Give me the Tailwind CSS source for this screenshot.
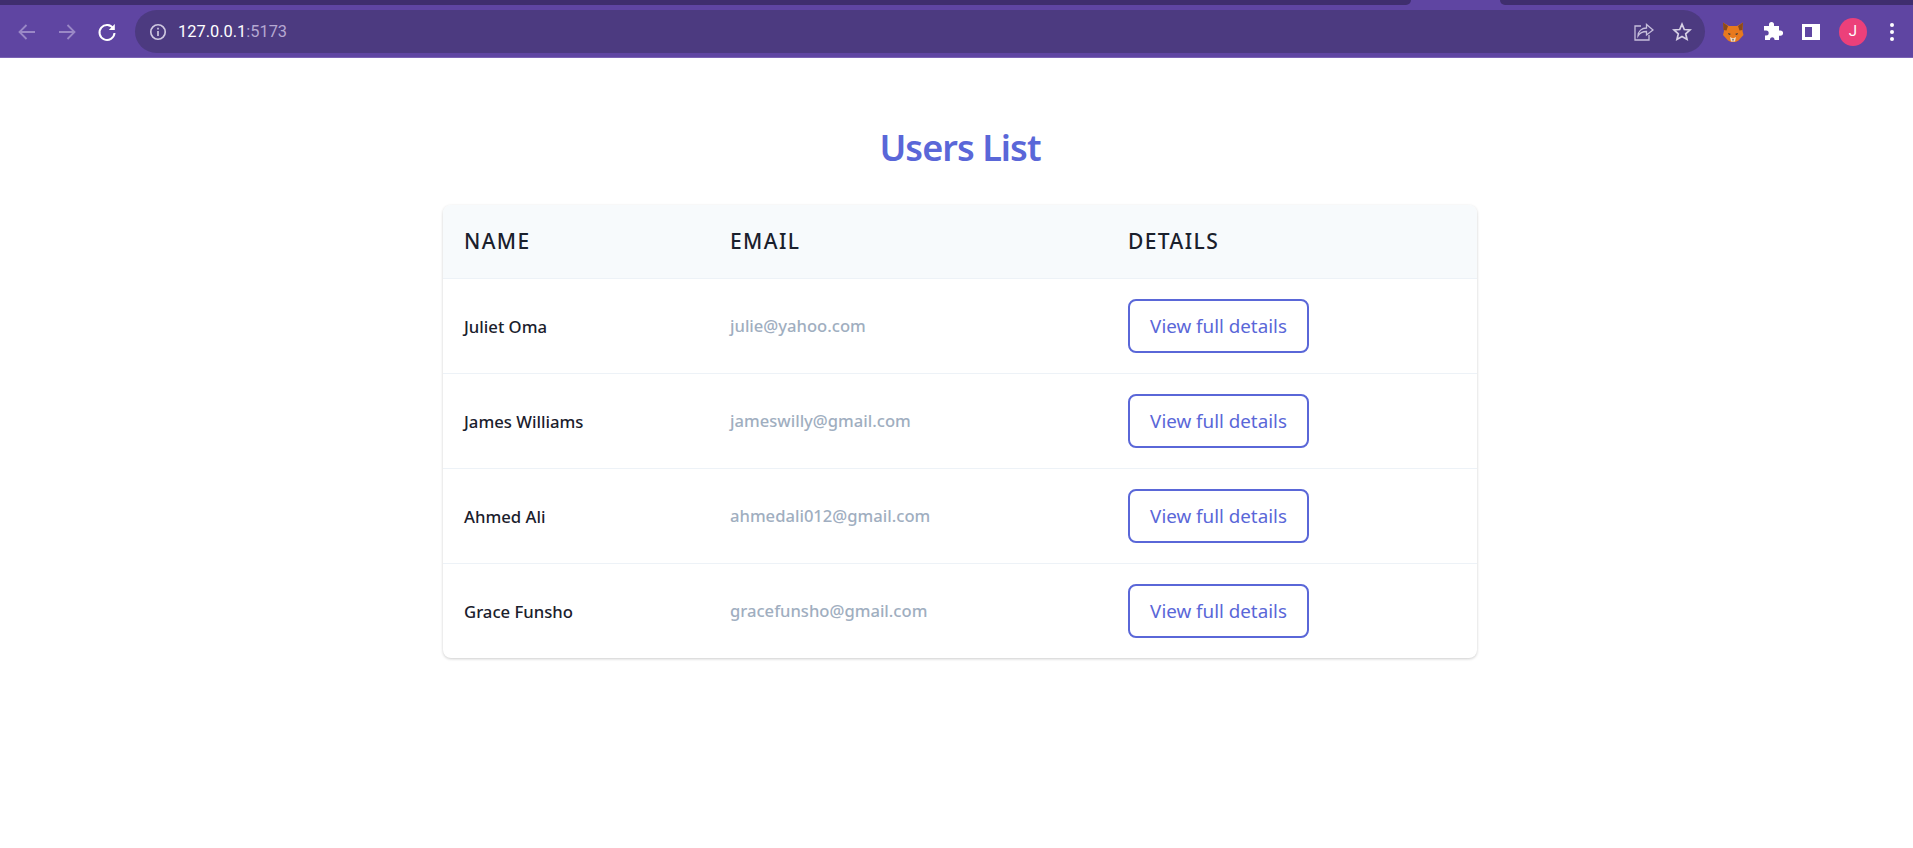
<!DOCTYPE html>
<html><head><meta charset="utf-8"><title>Users List</title>
<script src="https://cdn.jsdelivr.net/npm/@tailwindcss/browser@4"></script></head>
<body class="bg-white h-[848px] overflow-hidden font-['Noto_Sans',sans-serif]">
<header class="h-[58px] bg-[#5f45a2] border-b border-[#7a62b4] flex flex-col font-['Roboto',sans-serif]">
  <div class="h-[5px] flex justify-between">
    <div class="w-[1411px] bg-[#3f2e6e] rounded-br-lg"></div>
    <div class="w-[413px] bg-[#3f2e6e] rounded-bl-lg"></div>
  </div>
  <div class="flex-1 flex items-center pt-[5px] pb-[4px]">
    <div class="w-[135px] flex items-center pl-[15px] gap-[16px] shrink-0">
      <svg class="w-[24px] h-[24px]" viewBox="0 0 24 24" fill="none" stroke="#9a88c6" stroke-width="1.8"><path d="M20 12H4.500M11.500 5l-7 7 7 7"/></svg>
      <svg class="w-[24px] h-[24px]" viewBox="0 0 24 24" fill="none" stroke="#9a88c6" stroke-width="1.8"><path d="M4 12h15.500M12.500 5l7 7-7 7"/></svg>
      <svg class="w-[24px] h-[24px]" viewBox="0 0 24 24" fill="none" stroke="#fff" stroke-width="2"><path d="M18.400 8.500A7.500 7.500 0 1 0 19.500 13"/><path d="M19.800 4v6h-6z" fill="#fff" stroke="none"/></svg>
    </div>
    <div class="w-[1570px] h-[43px] rounded-full bg-[#4c3a80] flex items-center pl-[13px] pr-[10px] shrink-0">
      <svg class="w-[20px] h-[20px] shrink-0" viewBox="0 0 18 18" fill="none"><circle cx="9" cy="9" r="6.500" stroke="#cfc8e0" stroke-width="1.500"/><path d="M9 8v4.500M9 5.200v1.500" stroke="#cfc8e0" stroke-width="1.500"/></svg>
      <span class="ml-[10px] mt-[2px] text-[16.400px] text-white">127.0.0.1<span class="text-[#b5a8d2]">:5173</span></span>
      <span class="flex-1"></span>
      <svg class="w-[22px] h-[22px] mr-[18px]" viewBox="0 0 22 22" fill="none" stroke="#c6bedb" stroke-width="1.300"><path d="M9 5H3v14h14v-5"/><path d="M6 15c0-5 4-8 8.500-8V3.500L21 9l-6.500 5v-3.500c-4 0-6.500 1-8.500 4.500z"/></svg>
      <svg class="w-[20px] h-[20px] mr-[3px]" viewBox="0 0 20 20" fill="none" stroke="#d6d0e4" stroke-width="1.700"><path d="M10 2.200l2.300 5.300 5.700.5-4.300 3.800 1.300 5.600L10 14.500l-5 2.900 1.300-5.600L2 8l5.700-.5z"/></svg>
    </div>
    <div class="flex-1 flex items-center pl-[17px]">
      <svg class="w-[22px] h-[22px] shrink-0" viewBox="0 0 22 22"><path d="M1 1.500l6 3.500h8l6-3.500-.5 8.500 1 4-5 5.500-3 1.500H9l-3-1.500L1 14l1-4z" fill="#e8791e"/><path d="M1 1.500l5 3.500-1.500 4.500L1.500 9zM21 1.500L16 5l1.500 4.500 3-.5z" fill="#8a4a1c"/><path d="M8 16l3 1.500 3-1.500-1 4.500H9z" fill="#eadccb"/><path d="M6 12l3 1-2 1zM16 12l-3 1 2 1z" fill="#233447"/><path d="M10 18.500h2l-1 1.200z" fill="#161616"/></svg>
      <svg class="w-[22px] h-[22px] ml-[17px] shrink-0" viewBox="0 0 22 22" fill="#fff"><path d="M8 3.500a2.500 2.500 0 0 1 5 0V5h5v4.500h1.500a2.600 2.600 0 0 1 0 5.200H18V19h-4.500v-1a2.300 2.300 0 0 0-4.500 0v1H4v-4.500h1.200a2.500 2.500 0 0 0 0-5H3V5h5z"/></svg>
      <div class="w-[18px] h-[16px] ml-[19px] border-[3px] border-r-[8px] border-white shrink-0"></div>
      <div class="w-[28px] h-[28px] rounded-full bg-[#ec407a] ml-[19px] text-white text-[15px] flex items-center justify-center shrink-0">J</div>
      <div class="flex flex-col gap-[3px] ml-[23px] shrink-0">
        <span class="w-[4px] h-[4px] rounded-full bg-white"></span><span class="w-[4px] h-[4px] rounded-full bg-white"></span><span class="w-[4px] h-[4px] rounded-full bg-white"></span>
      </div>
    </div>
  </div>
</header>
<main class="flex flex-col items-center pl-[7px]">
  <h1 class="mt-[65px] h-[50px] leading-[50px] text-[36px] font-semibold text-[#5a67d8] tracking-[-0.95px]">Users List</h1>
  <div class="mt-[32px] w-[1034px] rounded-lg bg-white shadow-[0_1px_3px_rgba(0,0,0,0.2)] overflow-hidden">
    <table class="w-full table-fixed border-collapse">
      <thead class="bg-[#f7fafc] border-b border-[#edf2f7]">
        <tr class="h-[73px] text-left text-[21px] tracking-[1.4px] text-[#1a202c]">
          <th class="w-[266px] pl-[21px] font-medium">NAME</th>
          <th class="w-[398px] pl-[21px] font-medium">EMAIL</th>
          <th class="pl-[21px] font-medium">DETAILS</th>
        </tr>
      </thead>
      <tbody>
        <tr class="h-[95px] border-b border-[#edf2f7]">
          <td class="pl-[21px] pt-[2px] text-[16.700px] font-medium text-[#1a202c]">Juliet Oma</td>
          <td class="pl-[21px] pt-[2px] text-[16.600px] font-medium text-[#a0aec0]">julie@yahoo.com</td>
          <td class="pl-[21px]"><button class="h-[54px] w-[181px] pt-[1px] border-2 border-[#5a67d8] rounded-lg text-[18.800px] text-[#5a67d8]">View full details</button></td>
        </tr>
        <tr class="h-[95px] border-b border-[#edf2f7]">
          <td class="pl-[21px] pt-[2px] text-[16.700px] font-medium text-[#1a202c]">James Williams</td>
          <td class="pl-[21px] pt-[2px] text-[16.600px] font-medium text-[#a0aec0]">jameswilly@gmail.com</td>
          <td class="pl-[21px]"><button class="h-[54px] w-[181px] pt-[1px] border-2 border-[#5a67d8] rounded-lg text-[18.800px] text-[#5a67d8]">View full details</button></td>
        </tr>
        <tr class="h-[95px] border-b border-[#edf2f7]">
          <td class="pl-[21px] pt-[2px] text-[16.700px] font-medium text-[#1a202c]">Ahmed Ali</td>
          <td class="pl-[21px] pt-[2px] text-[16.600px] font-medium text-[#a0aec0]">ahmedali012@gmail.com</td>
          <td class="pl-[21px]"><button class="h-[54px] w-[181px] pt-[1px] border-2 border-[#5a67d8] rounded-lg text-[18.800px] text-[#5a67d8]">View full details</button></td>
        </tr>
        <tr class="h-[95px]">
          <td class="pl-[21px] pt-[2px] text-[16.700px] font-medium text-[#1a202c]">Grace Funsho</td>
          <td class="pl-[21px] pt-[2px] text-[16.600px] font-medium text-[#a0aec0]">gracefunsho@gmail.com</td>
          <td class="pl-[21px]"><button class="h-[54px] w-[181px] pt-[1px] border-2 border-[#5a67d8] rounded-lg text-[18.800px] text-[#5a67d8]">View full details</button></td>
        </tr>
      </tbody>
    </table>
  </div>
</main>
</body></html>
